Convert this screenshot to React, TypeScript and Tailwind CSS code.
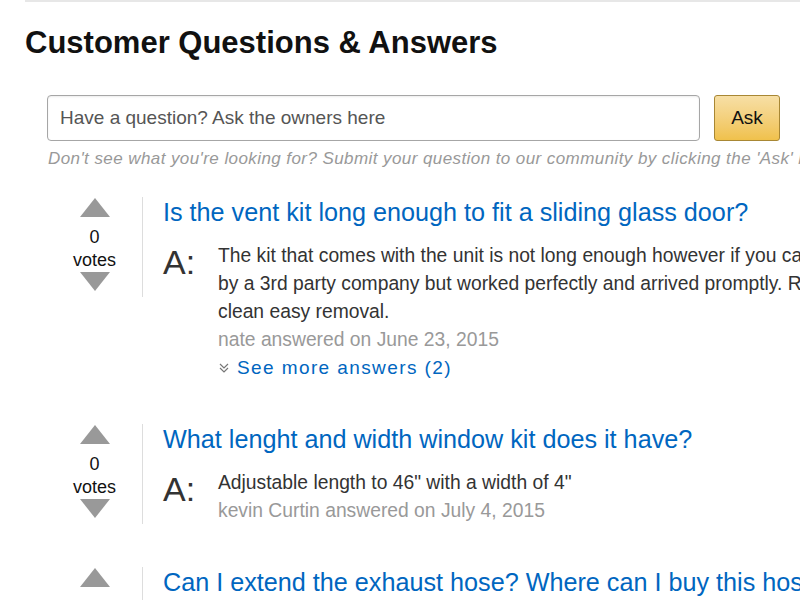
import React from "react";

const font = { fontFamily: '"Liberation Sans", Arial, Helvetica, sans-serif' };

function Up() {
  return (
    <svg width="30" height="19" viewBox="0 0 30 19" className="block">
      <polygon points="15,0 30,19 0,19" fill="#999999" />
    </svg>
  );
}
function Down() {
  return (
    <svg width="30" height="19" viewBox="0 0 30 19" className="block">
      <polygon points="0,0 30,0 15,19" fill="#999999" />
    </svg>
  );
}

function Votes() {
  return (
    <div className="w-[96px] shrink-0 h-[100px] border-r border-[#dddddd] flex flex-col items-center pt-[1px]">
      <Up />
      <div className="mt-[9px] text-[18px] leading-[23px] text-[#111] text-center">
        <div>0</div>
        <div>votes</div>
      </div>
      <div className="mt-0">
        <Down />
      </div>
    </div>
  );
}

function Question({
  title,
  lines,
  author,
  more,
}: {
  title: string;
  lines: string[];
  author?: string;
  more?: string;
}) {
  return (
    <div className="flex">
      <Votes />
      <div className="pl-[20px]">
        <div className="text-[25.2px] leading-[30px] text-[#0066c0] whitespace-nowrap">{title}</div>
        {lines.length > 0 && (
          <div className="flex mt-[15px]">
            <div className="w-[55px] shrink-0 text-[34px] leading-[34px] text-[#333] mt-[3px]">A:</div>
            <div className="text-[19.3px] leading-[28px]">
              {lines.map((l, i) => (
                <div key={i} className="whitespace-nowrap text-[#333]">
                  {l}
                </div>
              ))}
              {author && <div className="whitespace-nowrap text-[#999]">{author}</div>}
              {more && (
                <div className="flex items-center whitespace-nowrap">
                  <svg width="12" height="12" viewBox="0 0 12 12" className="mr-[7px]">
                    <polyline points="2,2 6,6 10,2" fill="none" stroke="#777" strokeWidth="1.2" />
                    <polyline points="2,6 6,10 10,6" fill="none" stroke="#777" strokeWidth="1.2" />
                  </svg>
                  <span className="text-[19px] text-[#0066c0] tracking-[1.4px]">{more}</span>
                </div>
              )}
            </div>
          </div>
        )}
      </div>
    </div>
  );
}

export default function App() {
  return (
    <div className="w-[800px] h-[600px] overflow-hidden bg-white" style={font}>
      <div className="ml-[25px] border-t-2 border-[#e7e7e7]">
        <h1 className="mt-[23px] text-[31px] leading-[36px] font-bold text-[#111] whitespace-nowrap">
          Customer Questions &amp; Answers
        </h1>
        <div className="ml-[22px] mt-[34px] flex">
          <div className="w-[653px] h-[46px] border border-[#a6a6a6] rounded-[4px] flex items-center pl-[12px] text-[19px] text-[#555] shadow-[inset_0_1px_2px_rgba(0,0,0,0.08)]">
            Have a question? Ask the owners here
          </div>
          <div className="ml-[14px] w-[66px] h-[46px] rounded-[3px] border border-[#a88734] bg-gradient-to-b from-[#f7dfa5] to-[#f0c14b] flex items-center justify-center text-[19px] text-[#111]">
            Ask
          </div>
        </div>
        <div className="ml-[23px] mt-[7px] text-[17px] leading-[22px] italic text-[#999] whitespace-nowrap tracking-[0.42px]">
          Don't see what you're looking for? Submit your question to our community by clicking the 'Ask' button.
        </div>
        <div className="ml-[22px] mt-[27px] flex flex-col gap-[42px]">
          <Question
            title="Is the vent kit long enough to fit a sliding glass door?"
            lines={[
              "The kit that comes with the unit is not long enough however if you can find an extension kit",
              "by a 3rd party company but worked perfectly and arrived promptly. Really good seal and",
              "clean easy removal.",
            ]}
            author="nate answered on June 23, 2015"
            more="See more answers (2)"
          />
          <Question
            title="What lenght and width window kit does it have?"
            lines={['Adjustable length to 46" with a width of 4"']}
            author="kevin Curtin answered on July 4, 2015"
          />
          <Question
            title="Can I extend the exhaust hose? Where can I buy this hose?"
            lines={["Yes, you can buy an extension hose from the manufacturer."]}
            author="someone answered on July 10, 2015"
          />
        </div>
      </div>
    </div>
  );
}
